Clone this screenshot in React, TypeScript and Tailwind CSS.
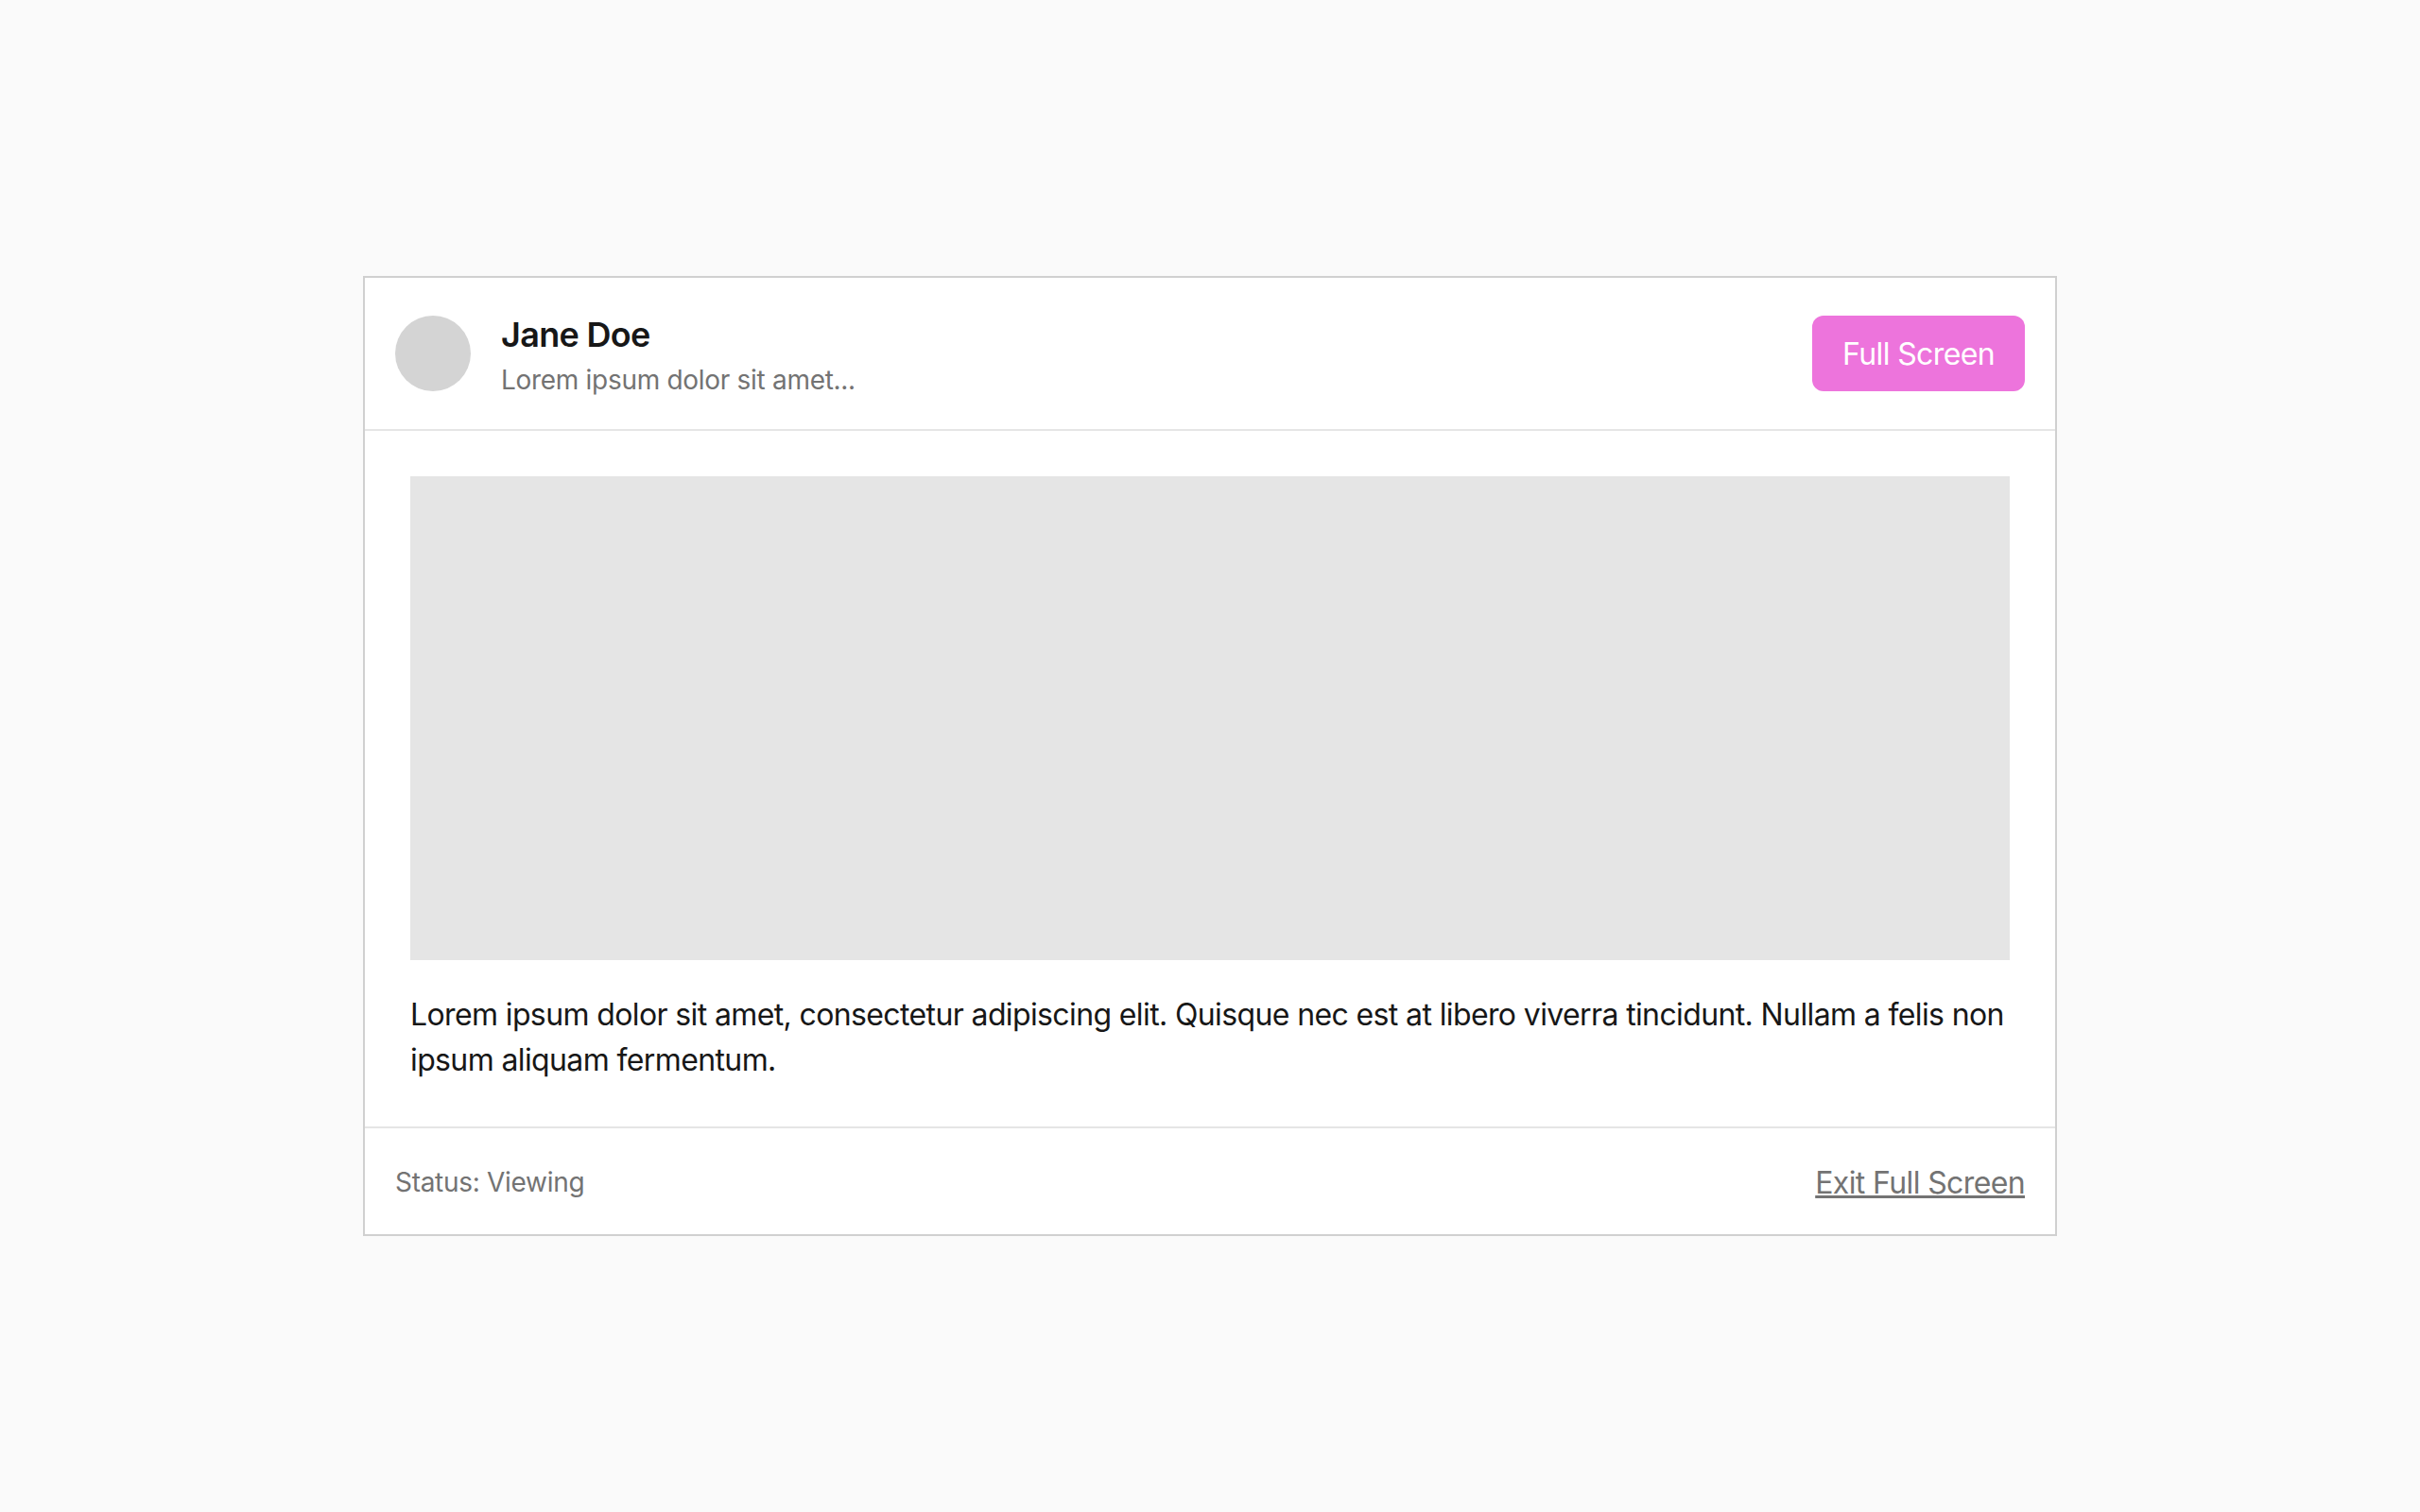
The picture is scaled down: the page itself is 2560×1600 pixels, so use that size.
export default function App() {
  return (
    <div className="flex min-h-screen items-center justify-center bg-[#fafafa] font-['Inter',sans-serif] text-[32px] leading-[48px] tracking-[-0.62px] text-[#171717]">
      <div className="w-[1792px] border-2 border-[#d0d0d0] bg-white">
        {/* Header */}
        <div className="flex items-center justify-between border-b-2 border-[#e5e5e5] px-8 py-10">
          <div className="flex items-center gap-8">
            <div className="h-20 w-20 rounded-full bg-[#d4d4d4]" />
            <div>
              <h2 className="text-[36px] leading-[40px] font-semibold tracking-[-0.7px]">Jane Doe</h2>
              <p className="mt-4 text-[28px] leading-[24px] tracking-[-0.3px] text-[#737373]">Lorem ipsum dolor sit amet...</p>
            </div>
          </div>
          <button className="h-20 rounded-xl bg-[#ed74dc] px-8 pt-[2px] text-white">Full Screen</button>
        </div>

        {/* Body */}
        <div className="px-12 pt-12 pb-[46px]">
          <div className="h-[512px] w-full bg-[#e5e5e5]" />
          <p className="mt-[34px]">
            Lorem ipsum dolor sit amet, consectetur adipiscing elit. Quisque nec est at libero viverra tincidunt. Nullam a felis non ipsum aliquam fermentum.
          </p>
        </div>

        {/* Footer */}
        <div className="flex items-center justify-between border-t-2 border-[#e5e5e5] px-8 pt-[34px] pb-[30px]">
          <span className="pb-[2px] text-[28px] leading-[44px] tracking-[-0.3px] text-[#737373]">Status: Viewing</span>
          <a href="#" className="text-[#737373] underline">Exit Full Screen</a>
        </div>
      </div>
    </div>
  );
}
